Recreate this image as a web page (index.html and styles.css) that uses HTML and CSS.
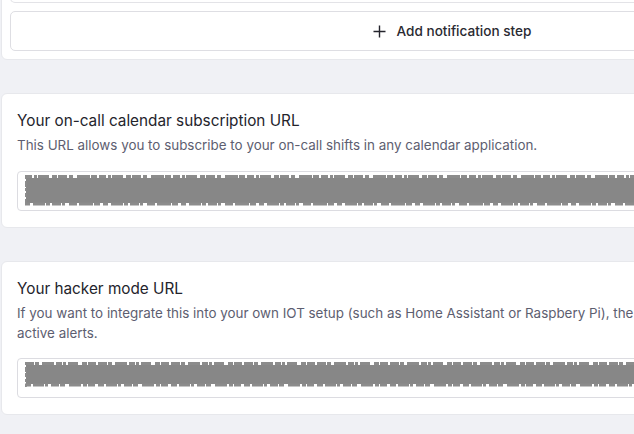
FILE: index.html
```html
<!DOCTYPE html>
<html lang="en">
<head>
<meta charset="utf-8">
<title>On-call settings</title>
<link rel="stylesheet" href="styles.css">
</head>
<body>
<div class="page">
  <section class="card card-steps">
    <div class="step-box"></div>
    <button class="add-step" type="button">
      <svg class="plus" width="13" height="13" viewBox="0 0 13 13" aria-hidden="true"><path d="M6.5 0.5v12M0.5 6.5h12" stroke="#24242c" stroke-width="1.4" fill="none"/></svg>
      <span>Add notification step</span>
    </button>
  </section>

  <section class="card">
    <h2 class="card-title">Your on-call calendar subscription URL</h2>
    <p class="card-desc">This URL allows you to subscribe to your on-call shifts in any calendar application.</p>
    <div class="url-field">
      <svg class="redact" width="612" height="31" viewBox="0 0 612 31" preserveAspectRatio="none" aria-hidden="true">
        <rect x="1" y="3" width="610" height="25" fill="#878787"/>
        <line x1="0" y1="1.5" x2="612" y2="1.5" stroke="#8c8c8c" stroke-width="3" stroke-dasharray="7 2 3 1 11 3 5 1 9 2 4 4 13 1 6 2"/>
        <line x1="0" y1="29" x2="612" y2="29" stroke="#8c8c8c" stroke-width="3" stroke-dasharray="5 3 12 1 4 2 9 1 3 4 8 2 14 1 6 3"/>
        <line x1="0.8" y1="0" x2="0.8" y2="31" stroke="#8c8c8c" stroke-width="2" stroke-dasharray="4 2 6 1 3 2"/>
      </svg>
    </div>
  </section>

  <section class="card">
    <h2 class="card-title">Your hacker mode URL</h2>
    <p class="card-desc">If you want to integrate this into your own IOT setup (such as Home Assistant or Raspbery Pi), the following URL returns a list of your active alerts.</p>
    <div class="url-field url-field-tight">
      <svg class="redact" width="610" height="25" viewBox="0 0 610 25" preserveAspectRatio="none" aria-hidden="true">
        <rect x="1" y="3" width="608" height="19" fill="#878787"/>
        <line x1="0" y1="1.5" x2="610" y2="1.5" stroke="#8c8c8c" stroke-width="3" stroke-dasharray="9 1 4 3 12 2 6 1 3 2 10 4 5 1 8 2"/>
        <line x1="0" y1="23" x2="610" y2="23" stroke="#8c8c8c" stroke-width="3" stroke-dasharray="6 2 11 1 3 3 8 1 5 4 12 2 4 1 7 3"/>
        <line x1="0.8" y1="0" x2="0.8" y2="25" stroke="#8c8c8c" stroke-width="2" stroke-dasharray="3 2 5 1 4 2"/>
      </svg>
    </div>
  </section>
</div>
</body>
</html>
```

FILE: styles.css
```css
html, body {
  margin: 0;
  padding: 0;
}
body {
  background: #f0f1f5;
  font-family: Inter, "Noto Sans", sans-serif;
  overflow: hidden;
  width: 634px;
  height: 434px;
}
.page {
  width: 900px;
  margin-left: 1px;
  margin-top: -40px;
  display: flex;
  flex-direction: column;
  gap: 33px;
}
.card {
  background: #ffffff;
  border: 1px solid #e7e8ec;
  border-radius: 6px;
  padding: 16px 16px 16px 15px;
}
.card-steps {
  padding: 0 8px 8px 8px;
  display: flex;
  flex-direction: column;
  gap: 8px;
}
.step-box {
  height: 41px;
  border: 1px solid #e3e3e7;
  border-top: none;
  border-radius: 0 0 5px 5px;
}
.add-step {
  height: 40px;
  border: 1px solid #dedee3;
  border-radius: 5px;
  background: #ffffff;
  display: flex;
  align-items: center;
  justify-content: center;
  gap: 11px;
  font-family: inherit;
  font-size: 13.6px;
  font-weight: 500;
  color: #2a2a32;
  padding: 0 0 0 2px;
}
.plus {
  display: block;
}
.card-title {
  margin: 0;
  font-size: 15.3px;
  font-weight: 400;
  line-height: 22px;
  color: #24242c;
}
.card-desc {
  margin: 3px 0 0 0;
  font-size: 13.4px;
  line-height: 20px;
  color: #5d5e70;
  max-width: 860px;
}
.url-field {
  margin-top: 16px;
  height: 40px;
  box-sizing: border-box;
  border: 1px solid #dcdce1;
  border-radius: 4px;
  padding: 3px 0 0 7px;
}
.url-field-tight {
  margin-top: 15px;
}
.redact {
  display: block;
}
```
